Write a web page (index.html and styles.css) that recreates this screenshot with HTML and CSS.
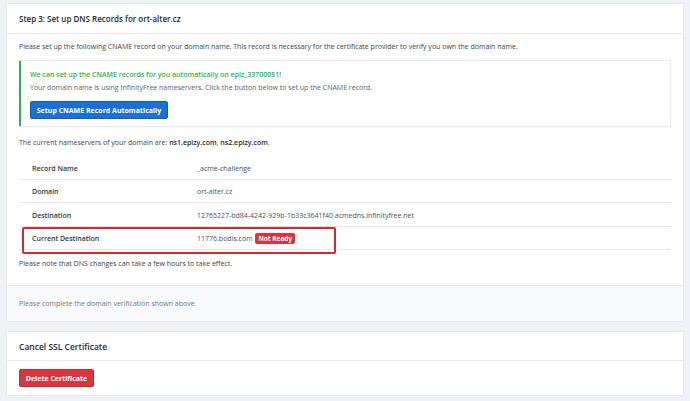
FILE: index.html
```html
<!doctype html>
<html>
<head>
  <title>SSL Certificate</title>
  <link rel="stylesheet" href="styles.css">
</head>
<body>

  <div class="card">
    <div class="card-header">Step 3: Set up DNS Records for ort-alter.cz</div>
    <div class="card-body">
      <p class="text">Please set up the following CNAME record on your domain name. This record is necessary for the certificate provider to verify you own the domain name.</p>

      <div class="callout">
        <p class="callout-title">We can set up the CNAME records for you automatically on epiz_33700051!</p>
        <p class="text">Your domain name is using InfinityFree nameservers. Click the button below to set up the CNAME record.</p>
        <button class="btn btn-blue">Setup CNAME Record Automatically</button>
      </div>

      <p class="text ns">The current nameservers of your domain are: <b>ns1.epizy.com</b>, <b>ns2.epizy.com</b>.</p>

      <div class="records">
        <div class="row"><div class="label">Record Name</div><div class="value">_acme-challenge</div></div>
        <div class="row"><div class="label">Domain</div><div class="value">ort-alter.cz</div></div>
        <div class="row"><div class="label">Destination</div><div class="value">12765227-bd84-4242-929b-1b33c3641f40.acmedns.infinityfree.net</div></div>
        <div class="row"><div class="label">Current Destination</div><div class="value">11776.bodis.com <span class="badge">Not Ready</span></div></div>
        <div class="highlight"></div>
      </div>

      <p class="text note">Please note that DNS changes can take a few hours to take effect.</p>
    </div>
    <div class="card-footer">Please complete the domain verification shown above.</div>
  </div>

  <div class="card card-cancel">
    <div class="card-header">Cancel SSL Certificate</div>
    <div class="card-body short">
      <button class="btn btn-red">Delete Certificate</button>
    </div>
  </div>

</body>
</html>
```

FILE: styles.css
```css
body {
  margin: 0;
  padding: 3px 6px 0 6px;
  background: #eef2f7;
  font-family: "Open Sans", "Noto Sans", sans-serif;
  font-size: 7px;
  color: #3a3f45;
}

p {
  margin: 0;
}

b {
  font-weight: 600;
  color: #24292f;
}

.card {
  background: #fff;
  border: 1px solid #e4e8ed;
  border-radius: 2px;
}

.card-cancel {
  margin-top: 9px;
}

.card-header {
  display: flex;
  align-items: center;
  height: 29px;
  padding: 0 12px;
  border-bottom: 1px solid #e6e9ed;
  font-size: 8px;
  font-weight: 600;
  color: #24292f;
}

.card-cancel .card-header {
  height: 28px;
  font-size: 8.5px;
}

.card-body {
  padding: 7px 12px 15px 12px;
}

.card-body.short {
  padding: 8px 12px 8px 12px;
}

.text {
  line-height: 12px;
}

.callout {
  margin-top: 7px;
  padding: 8px 9px 7px 9px;
  border: 1px solid #e6e9ed;
  border-left: 2px solid #2bb24c;
  border-radius: 2px;
  box-shadow: 0 1px 2px rgba(0, 0, 0, 0.04);
}

.callout-title {
  line-height: 12px;
  color: #2bb24c;
  font-weight: 600;
}

.callout .text {
  margin-top: 1px;
  color: #5b6168;
}

.btn {
  display: block;
  height: 18px;
  padding: 0;
  border-radius: 2px;
  font-family: inherit;
  font-size: 7px;
  font-weight: 700;
  color: #fff;
  white-space: nowrap;
  text-align: center;
  cursor: pointer;
}

.btn-blue {
  margin-top: 7px;
  width: 138px;
  background: #1c6fd3;
  border: 1px solid #155cb3;
}

.btn-red {
  width: 75px;
  background: #d9353f;
  border: 1px solid #c22a33;
}

.ns {
  margin-top: 10px;
}

.records {
  position: relative;
  margin-top: 7px;
}

.row {
  box-sizing: border-box;
  display: grid;
  grid-template-columns: 165px 1fr;
  align-items: center;
  height: 23px;
  padding-top: 1px;
  border-bottom: 1px solid #e8ebee;
}

.row:nth-child(odd) {
  height: 24px;
}

.label {
  padding: 0 13px;
  font-weight: 600;
  color: #32373d;
}

.value {
  padding: 0 13px;
  color: #4a5057;
}

.badge {
  display: inline-block;
  margin-left: 1px;
  padding: 0 3px;
  line-height: 11px;
  border-radius: 2px;
  background: #d9353f;
  color: #fff;
  font-weight: 700;
  font-size: 6.5px;
}

.highlight {
  position: absolute;
  left: 3px;
  top: 71px;
  width: 310px;
  height: 23px;
  border: 2px solid #d9262f;
  border-radius: 2px;
}

.note {
  margin-top: 8px;
}

.card-footer {
  display: flex;
  align-items: center;
  height: 35px;
  padding: 0 12px;
  border-top: 1px solid #e6e9ed;
  background: #f8f9fb;
  color: #737a82;
}
```
